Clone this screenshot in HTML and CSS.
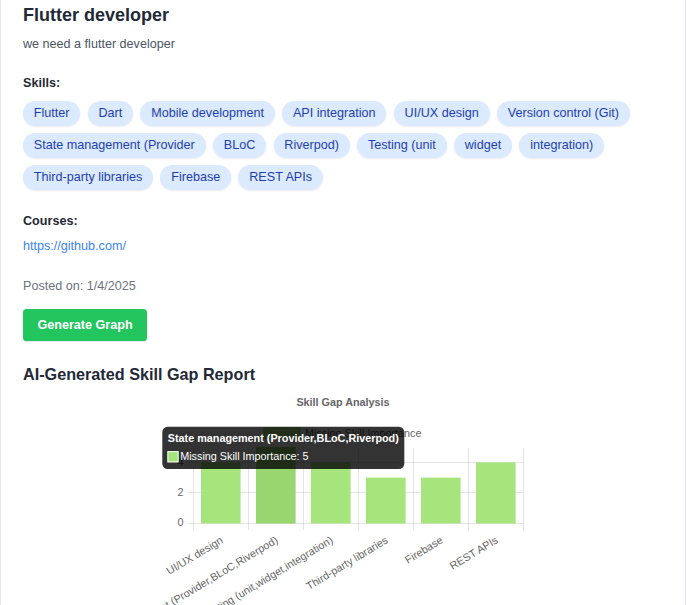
FILE: index.html
```html
<!DOCTYPE html>
<html lang="en">
<head>
<meta charset="utf-8">
<title>Flutter developer</title>
<link rel="stylesheet" href="styles.css">
</head>
<body>
<div class="card">
  <h1 class="title">Flutter developer</h1>
  <p class="desc">we need a flutter developer</p>

  <h3 class="label label-skills">Skills:</h3>
  <div class="chips">
    <span class="chip">Flutter</span>
    <span class="chip">Dart</span>
    <span class="chip">Mobile development</span>
    <span class="chip">API integration</span>
    <span class="chip">UI/UX design</span>
    <span class="chip">Version control (Git)</span>
    <span class="chip">State management (Provider</span>
    <span class="chip">BLoC</span>
    <span class="chip">Riverpod)</span>
    <span class="chip">Testing (unit</span>
    <span class="chip">widget</span>
    <span class="chip">integration)</span>
    <span class="chip">Third-party libraries</span>
    <span class="chip">Firebase</span>
    <span class="chip">REST APIs</span>
  </div>

  <h3 class="label label-courses">Courses:</h3>
  <a class="link" href="#">https://github.com/</a>

  <p class="posted">Posted on: 1/4/2025</p>

  <button class="btn" type="button">Generate Graph</button>

  <h2 class="report">AI-Generated Skill Gap Report</h2>

  <svg class="chart" width="640" height="220" viewBox="23 392 640 220" xmlns="http://www.w3.org/2000/svg">
    <text class="c-title" x="343" y="406" text-anchor="middle">Skill Gap Analysis</text>

    <rect x="264" y="427.6" width="36" height="10.8" fill="#a6e57c" stroke="#93d867" stroke-width="1"/>
    <text class="c-txt" x="305" y="436.8">Missing Skill Importance</text>

    <g stroke="rgba(0,0,0,0.1)" stroke-width="1">
      <line x1="193.5" y1="448" x2="193.5" y2="530"/>
      <line x1="248.5" y1="448" x2="248.5" y2="530"/>
      <line x1="303.5" y1="448" x2="303.5" y2="530"/>
      <line x1="358.5" y1="448" x2="358.5" y2="530"/>
      <line x1="413.5" y1="448" x2="413.5" y2="530"/>
      <line x1="468.5" y1="448" x2="468.5" y2="530"/>
      <line x1="523.5" y1="448" x2="523.5" y2="530"/>
      <line x1="187" y1="523.5" x2="523.5" y2="523.5"/>
      <line x1="187" y1="492.5" x2="523.5" y2="492.5"/>
      <line x1="187" y1="462.5" x2="523.5" y2="462.5"/>
    </g>

    <text class="c-txt" x="183.5" y="526.3" text-anchor="end">0</text>
    <text class="c-txt" x="183.5" y="496.3" text-anchor="end">2</text>
    <text class="c-txt" x="183.5" y="466.3" text-anchor="end">4</text>

    <rect x="201" y="462.3" width="39.6" height="61.2" fill="#a6e57c"/>
    <rect x="256" y="447" width="39.6" height="76.5" fill="#98d76f"/>
    <rect x="311" y="462.3" width="39.6" height="61.2" fill="#a6e57c"/>
    <rect x="366" y="477.6" width="39.6" height="45.9" fill="#a6e57c"/>
    <rect x="421" y="477.6" width="39.6" height="45.9" fill="#a6e57c"/>
    <rect x="476" y="462.3" width="39.6" height="61.2" fill="#a6e57c"/>

    <g class="c-txt" text-anchor="end">
      <text transform="translate(221.8 539) rotate(-31)" dy="0.35em">UI/UX design</text>
      <text transform="translate(276.8 539) rotate(-31)" dy="0.35em">State management (Provider,BLoC,Riverpod)</text>
      <text transform="translate(331.8 539) rotate(-31)" dy="0.35em">Testing (unit,widget,integration)</text>
      <text transform="translate(386.8 539) rotate(-31)" dy="0.35em">Third-party libraries</text>
      <text transform="translate(441.8 539) rotate(-31)" dy="0.35em">Firebase</text>
      <text transform="translate(496.8 539) rotate(-31)" dy="0.35em">REST APIs</text>
    </g>

    <rect x="162.3" y="426.7" width="242" height="42.3" rx="5.4" fill="rgba(0,0,0,0.8)"/>
    <text class="t-title" x="167.8" y="441.7">State management (Provider,BLoC,Riverpod)</text>
    <rect x="167.8" y="451.6" width="10.4" height="10.4" fill="#a6e57c" stroke="#ffffff" stroke-width="1"/>
    <text class="t-body" x="180.2" y="460.3">Missing Skill Importance: 5</text>
  </svg>
</div>
</body>
</html>
```
FILE: styles.css
```css
* {
  box-sizing: border-box;
}

html, body {
  margin: 0;
  padding: 0;
  background: #ffffff;
}

body {
  font-family: "Liberation Sans", Arial, sans-serif;
  width: 686px;
  height: 605px;
  overflow: hidden;
}

.card {
  width: 686px;
  border-left: 1px solid #e5e7eb;
  border-right: 1px solid #e5e7eb;
  padding: 2.9px 22px 0 22px;
  display: flex;
  flex-direction: column;
  align-items: flex-start;
}

.title {
  margin: 0 0 7px 0;
  font-size: 18px;
  line-height: 25.2px;
  font-weight: 700;
  color: #1f2937;
}

.desc {
  margin: 0;
  font-size: 12.6px;
  line-height: 18px;
  color: #4b5563;
}

.label {
  margin: 0;
  font-size: 12.6px;
  line-height: 18px;
  font-weight: 700;
  color: #1f2937;
}

.label-skills {
  margin-top: 20.7px;
}

.chips {
  margin-top: 8.9px;
  display: flex;
  flex-wrap: wrap;
  column-gap: 7.4px;
  row-gap: 6.8px;
  width: 640px;
}

.chip {
  display: inline-block;
  background: #dbeafe;
  color: #1e40af;
  font-size: 12.6px;
  line-height: 18px;
  padding: 3.6px 10.8px;
  border-radius: 9999px;
  box-shadow: 0 1px 2px rgba(0, 0, 0, 0.08);
  white-space: nowrap;
}

.label-courses {
  margin-top: 21.7px;
}

.link {
  margin-top: 7px;
  display: block;
  font-size: 12.6px;
  line-height: 18px;
  color: #3b82f6;
  text-decoration: none;
}

.posted {
  margin: 22px 0 0 0;
  font-size: 12.6px;
  line-height: 18px;
  color: #6b7280;
}

.btn {
  margin-top: 14.4px;
  background: #22c55e;
  color: #ffffff;
  border: none;
  border-radius: 3.6px;
  padding: 7.2px 14.4px;
  font-family: "Liberation Sans", Arial, sans-serif;
  font-size: 12.6px;
  line-height: 18px;
  font-weight: 700;
  box-shadow: 0 1px 2px rgba(0, 0, 0, 0.1);
}

.report {
  margin: 21.1px 0 0 0;
  font-size: 16.2px;
  line-height: 25.2px;
  font-weight: 700;
  color: #1f2937;
}

.chart {
  display: block;
  margin-top: 4.3px;
  overflow: hidden;
}

.c-title {
  font-family: "Liberation Sans", Arial, sans-serif;
  font-size: 10.8px;
  font-weight: 700;
  fill: #666666;
}

.c-txt {
  font-family: "Liberation Sans", Arial, sans-serif;
  font-size: 10.8px;
  fill: #666666;
}

.t-title {
  font-family: "Liberation Sans", Arial, sans-serif;
  font-size: 10.8px;
  font-weight: 700;
  fill: #ffffff;
}

.t-body {
  font-family: "Liberation Sans", Arial, sans-serif;
  font-size: 10.8px;
  fill: #ffffff;
}
```
